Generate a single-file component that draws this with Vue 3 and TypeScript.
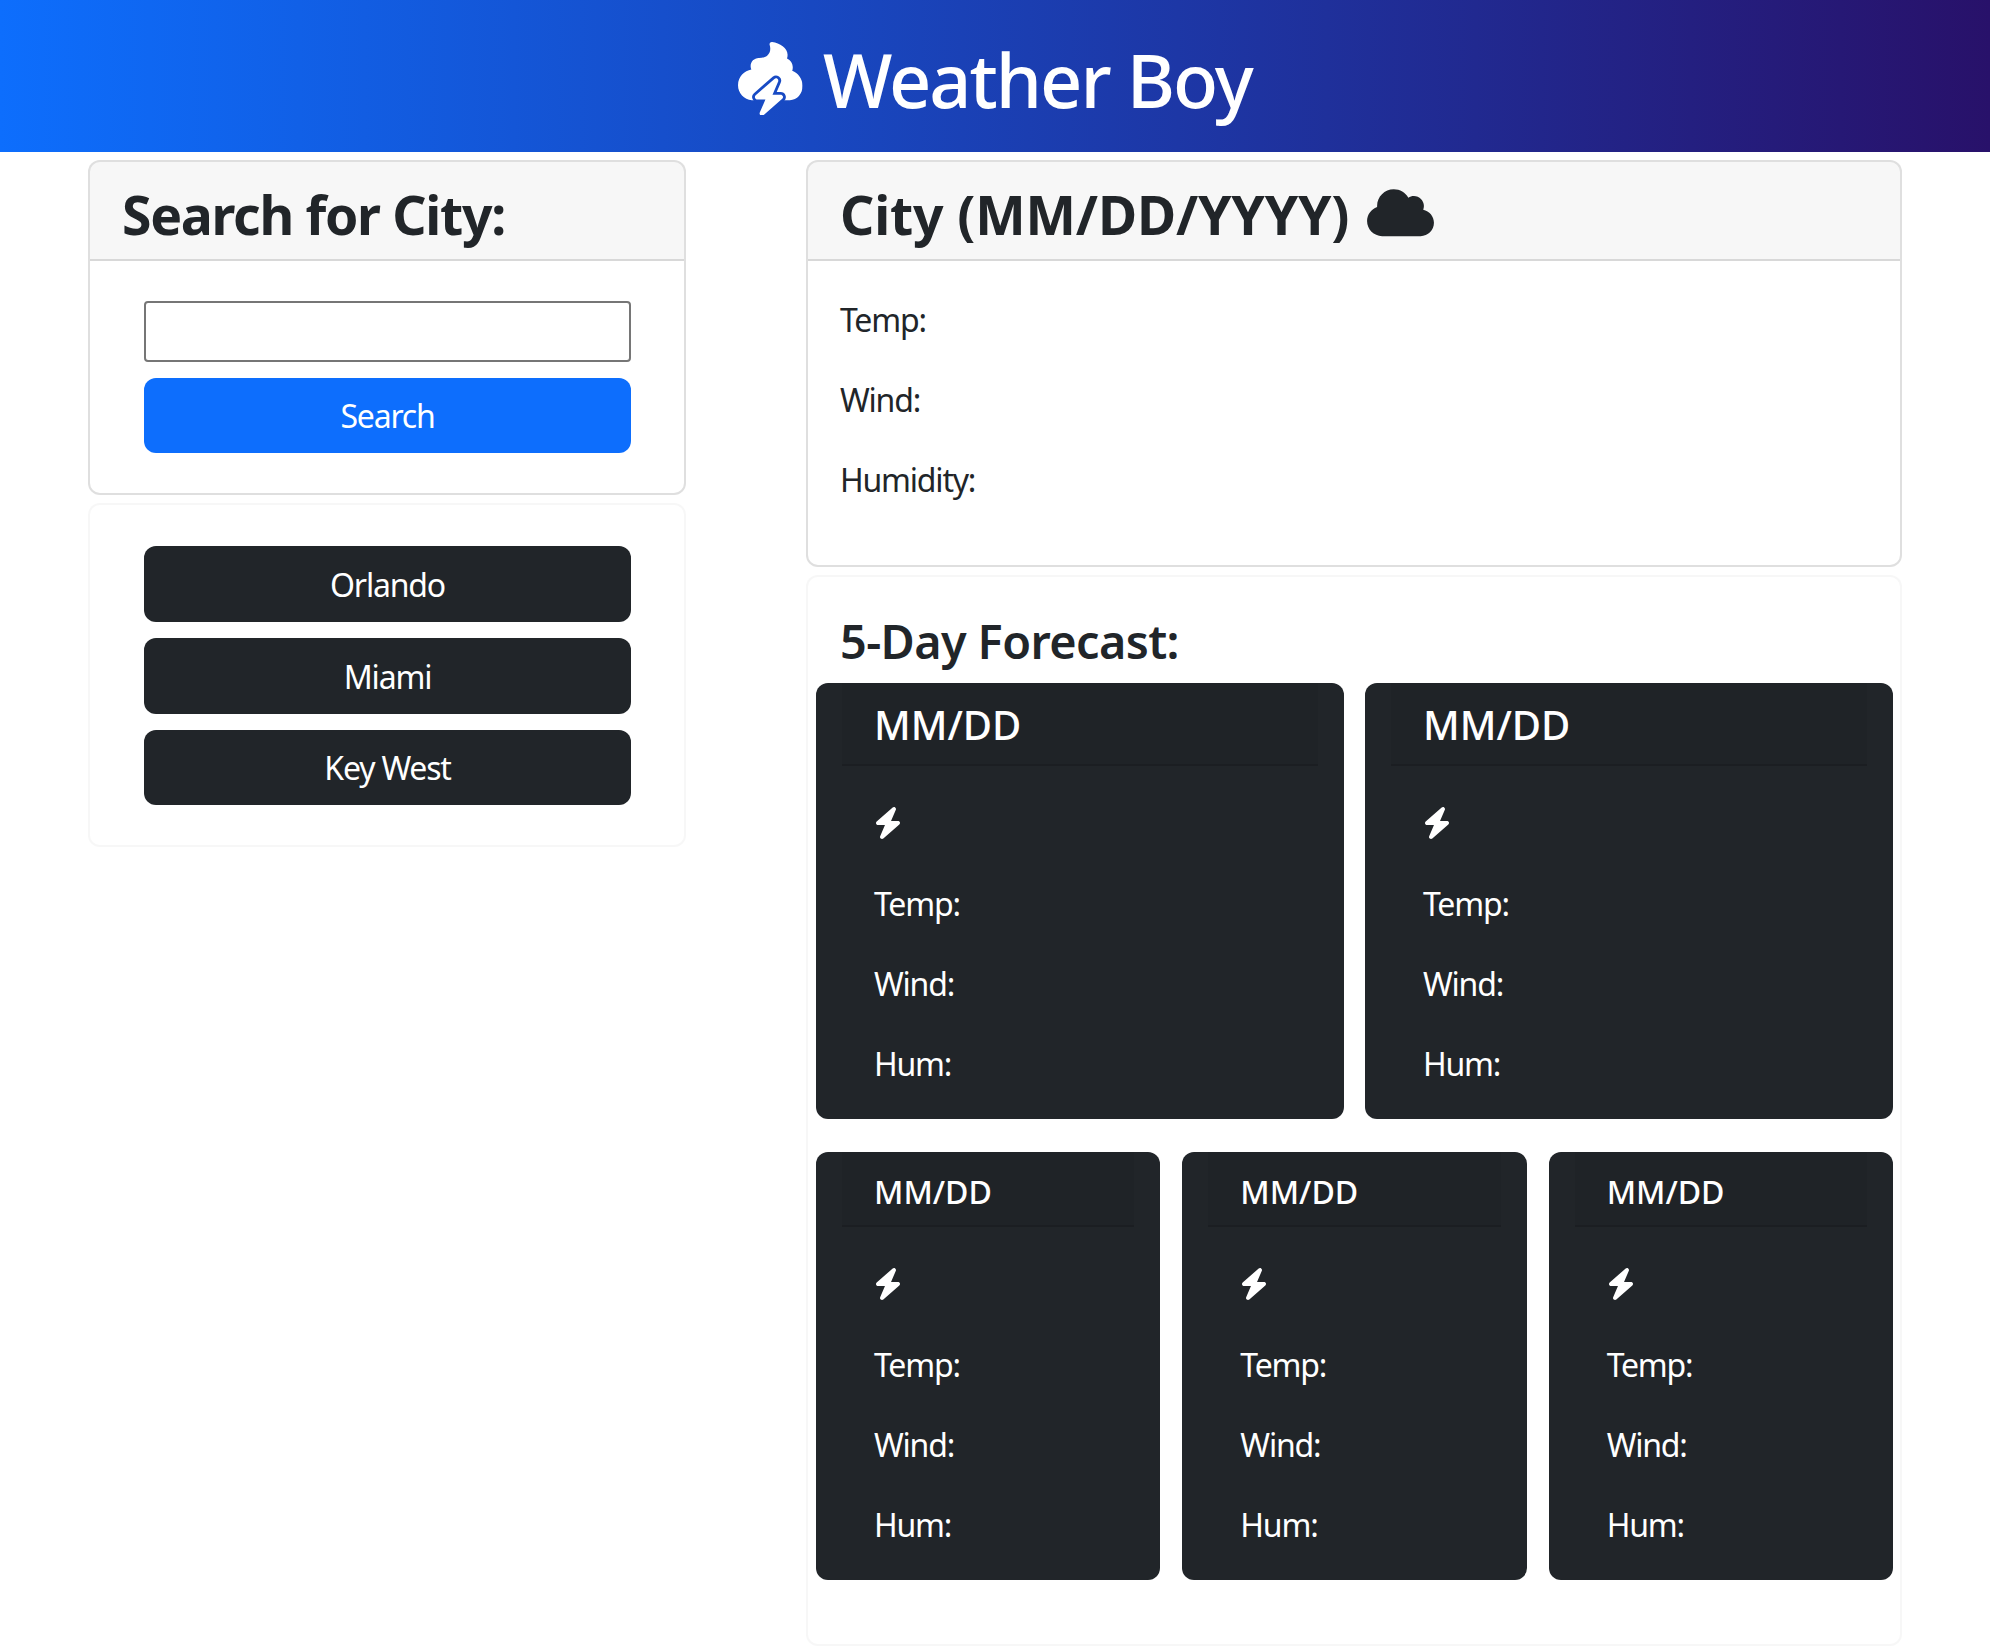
<script setup lang="ts">
const cities: string[] = ['Orlando', 'Miami', 'Key West']
const topDays: number[] = [1, 2]
const bottomDays: number[] = [3, 4, 5]
const bolt =
  'M349.4 44.6c5.9-13.7 1.5-29.7-10.6-38.5s-28.6-8-39.9 1.8l-256 224c-10 8.8-13.6 22.9-8.9 35.3S50.7 288 64 288H175.5L98.6 467.4c-5.9 13.7-1.5 29.7 10.6 38.5s28.6 8 39.9-1.8l256-224c10-8.8 13.6-22.9 8.9-35.3s-18.2-20.4-31.5-20.4H272.5L349.4 44.6z'
</script>

<template>
  <div class="page">
    <header class="top">
      <h1 class="brand">
        <svg class="brand-icon" viewBox="0 0 448 512" aria-hidden="true">
          <defs>
            <mask id="storm-cut">
              <rect width="448" height="512" fill="#fff" />
              <path :d="bolt" transform="translate(101 252) scale(0.508)" fill="#000" stroke="#000" stroke-width="76" stroke-linejoin="round" />
            </mask>
          </defs>
          <path
            mask="url(#storm-cut)"
            fill="#fff"
            d="M236.9.2c-5.5-.7-11 1.4-14.5 5.7s-4.6 10.1-2.8 15.4c2.8 8.2 4.3 16.9 4.3 26.1c0 21.7-8.5 37.2-21.9 47.6c-13.8 10.8-34 17-57.8 16.7c-.2 0-.5 0-.7 0c-30.9 0-56 25.1-56 56c0 8.4 1.9 16.4 5.2 23.6C44.7 199.1 0 240 0 300c0 55 42 100 96 104H360c50 0 88-44 88-100c0-50-32-88-72-104c3-7 4-14 4-24c0-28-16-52-40-62c3-8 4-16 4-26C344 40 290 8 236.9.2z"
          />
          <path :d="bolt" transform="translate(101 252) scale(0.508)" fill="#fff" />
        </svg>
        <span class="brand-text">Weather Boy</span>
      </h1>
    </header>

    <main class="layout">
      <aside class="side">
        <section class="card">
          <div class="card-head"><h3 class="head-title search-title">Search for City:</h3></div>
          <form class="search" @submit.prevent>
            <input class="city-input" type="text" aria-label="City" />
            <button class="btn btn-blue" type="button">Search</button>
          </form>
        </section>
        <section class="card card-faint history">
          <button v-for="city in cities" :key="city" class="btn btn-dark" type="button">{{ city }}</button>
        </section>
      </aside>

      <div class="content">
        <section class="card current">
          <div class="card-head">
            <h3 class="head-title city-title">
              City (MM/DD/YYYY)
              <svg class="cloud" viewBox="0 0 640 512" aria-hidden="true">
                <path d="M144 480C64.5 480 0 415.5 0 336c0-62.8 40.2-116.2 96.2-135.9c-.1-2.7-.2-5.4-.2-8.1c0-88.4 71.6-160 160-160c59.3 0 111 32.2 138.7 80.2C409.9 102 428.3 96 448 96c53 0 96 43 96 96c0 12.2-2.3 23.8-6.4 34.6C596 238.4 640 290.1 640 352c0 70.7-57.3 128-128 128H144z" />
              </svg>
            </h3>
          </div>
          <div class="current-body">
            <p>Temp:</p>
            <p>Wind:</p>
            <p>Humidity:</p>
          </div>
        </section>

        <section class="card card-faint forecast">
          <h4 class="forecast-title">5-Day Forecast:</h4>
          <div class="row row-top">
            <article v-for="d in topDays" :key="d" class="day">
              <div class="day-head"><h5>MM/DD</h5></div>
              <div class="day-body">
                <p><svg class="bolt" viewBox="0 0 448 512" aria-hidden="true"><path :d="bolt" /></svg></p>
                <p>Temp:</p>
                <p>Wind:</p>
                <p class="last">Hum:</p>
              </div>
            </article>
          </div>
          <div class="row row-bottom">
            <article v-for="d in bottomDays" :key="d" class="day">
              <div class="day-head"><h6>MM/DD</h6></div>
              <div class="day-body">
                <p><svg class="bolt" viewBox="0 0 448 512" aria-hidden="true"><path :d="bolt" /></svg></p>
                <p>Temp:</p>
                <p>Wind:</p>
                <p class="last">Hum:</p>
              </div>
            </article>
          </div>
        </section>
      </div>
    </main>
  </div>
</template>

<style>
html,
body {
  margin: 0;
  background: #fff;
}
</style>

<style scoped>
* {
  box-sizing: border-box;
}
.page {
  width: 1990px;
  min-height: 1652px;
  font-family: "Noto Sans", "Open Sans", sans-serif;
  font-size: 32px;
  line-height: 48px;
  color: #212529;
  letter-spacing: -1.2px;
}
.top {
  height: 152px;
  padding-top: 5px;
  background: linear-gradient(to right, #0d6efd, #28116a);
  display: flex;
  justify-content: center;
  align-items: center;
}
.brand {
  margin: 0;
  display: flex;
  align-items: center;
  gap: 20px;
  font-size: 73.8px;
  font-weight: 500;
  line-height: 88px;
  color: #fff;
  letter-spacing: -2px;
}
.brand-icon {
  width: 64.6px;
  height: 73.8px;
  flex: none;
}
.brand-text {
  padding-top: 2px;
}
.layout {
  display: grid;
  grid-template-columns: 598px 1096px;
  justify-content: space-between;
  padding: 8px 88px 0 88px;
}
.side,
.content {
  display: flex;
  flex-direction: column;
  gap: 8px;
}
.card {
  border: 2px solid rgba(0, 0, 0, 0.125);
  border-radius: 12px;
  background: #fff;
}
.card-faint {
  border-color: rgba(0, 0, 0, 0.03);
}
.card-head {
  padding: 21px 32px 11.5px;
  background: rgba(0, 0, 0, 0.03);
  border-bottom: 2px solid rgba(0, 0, 0, 0.125);
  border-radius: 10px 10px 0 0;
}
.head-title {
  margin: 0;
  font-size: 53.5px;
  line-height: 64px;
  font-weight: 700;
}
.search-title {
  letter-spacing: -1.3px;
}
.city-title {
  letter-spacing: -0.15px;
}
.cloud {
  width: 67px;
  height: 53.5px;
  margin-left: 4px;
  fill: #212529;
  vertical-align: -4.5px;
}
.search {
  display: flex;
  flex-direction: column;
  gap: 16px;
  padding: 40px 53px 40.4px 54px;
}
.city-input {
  height: 61px;
  border: 2px solid #767676;
  border-radius: 4px;
  background: #fff;
  padding: 2px 4px;
  outline: none;
}
.btn {
  height: 75.6px;
  border: 2px solid transparent;
  border-radius: 12px;
  font: inherit;
  letter-spacing: inherit;
  color: #fff;
  text-align: center;
  padding: 2px 0 0;
}
.btn-blue {
  background: #0d6efd;
}
.btn-dark {
  background: #212529;
}
.history {
  display: flex;
  flex-direction: column;
  gap: 16px;
  padding: 41px 53px 40px 54px;
}
.current-body {
  padding: 35.5px 32px 28.5px;
}
.current-body p {
  margin: 0 0 32px;
}
.forecast {
  padding: 36px 7px 64px 8px;
}
.forecast-title {
  margin: 0 0 14.3px;
  padding-left: 24px;
  font-size: 46.8px;
  line-height: 56px;
  font-weight: 600;
  letter-spacing: -0.6px;
}
.row {
  display: flex;
}
.row-top {
  gap: 21px;
  margin-bottom: 32.5px;
}
.row-bottom {
  gap: 22px;
}
.day {
  flex: 1 1 0;
  min-width: 0;
  background: #212529;
  color: #fff;
  border-radius: 12px;
  padding: 0 26px;
}
.day-head {
  border-bottom: 2px solid rgba(0, 0, 0, 0.125);
  background: rgba(0, 0, 0, 0.03);
}
.row-top .day-head {
  padding: 18.5px 32px 15px;
}
.row-bottom .day-head {
  padding: 21px 32px 13.5px;
}
.day-head h5 {
  margin: 0;
  font-size: 40px;
  line-height: 48px;
  font-weight: 500;
  letter-spacing: 0;
}
.day-head h6 {
  margin: 0;
  font-size: 32px;
  line-height: 38.4px;
  font-weight: 500;
  letter-spacing: 0;
}
.day-body {
  padding: 34px 32px 31px;
}
.day-body p {
  margin: 0 0 32px;
}
.day-body p.last {
  margin-bottom: 0;
}
.bolt {
  width: 28px;
  height: 32px;
  fill: #fff;
  vertical-align: -3px;
}
</style>
